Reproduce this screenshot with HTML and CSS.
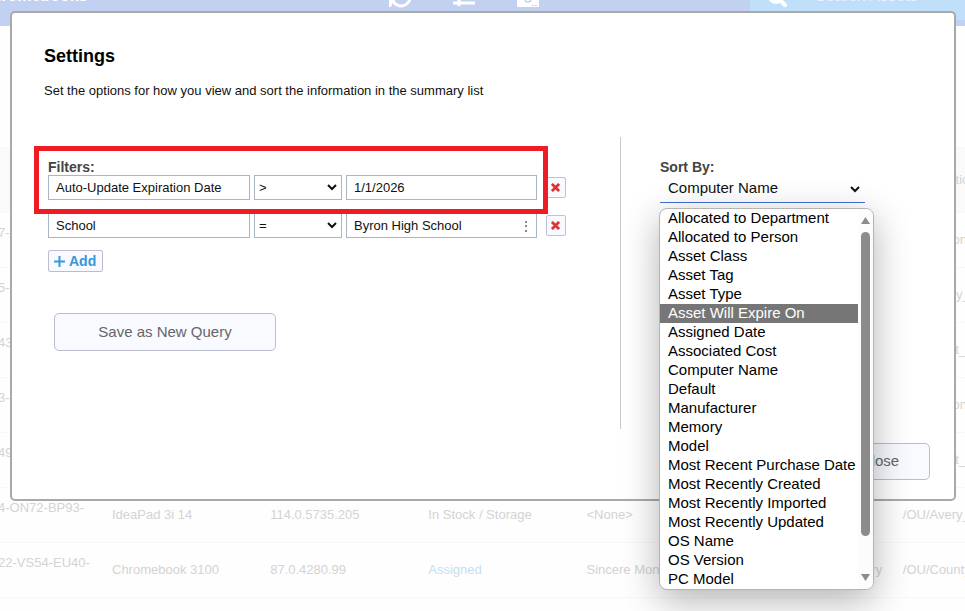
FILE: index.html
```html
<!DOCTYPE html>
<html lang="en">
  <head>
    <meta charset="UTF-8" />
    <title>Chromebooks - Settings</title>
    <link rel="stylesheet" href="styles.css">
  </head>
  <body>
    <div class="page">
      <header class="topbar">
        <span class="topbar-title">Chromebooks</span>
        <div class="topbar-icons">
          <svg width="24" height="24" viewBox="0 0 24 24" fill="none" stroke="#fff" stroke-width="3">
            <path d="M3 12a9 9 0 0 1 17-3M22 12a9 9 0 0 1-17 5" />
            <path d="M1 14h9l-5 4-2 5H1z" fill="#fff" stroke="none" />
          </svg>
          <svg width="24" height="24" viewBox="0 0 24 24" stroke="#fff" stroke-width="3">
            <path d="M1 5h22M1 12h22M1 19h22M7 16v6M16 9v6M9 2v6" />
          </svg>
          <svg width="24" height="24" viewBox="0 0 24 24">
            <path d="M1 3h22v19q0 1-1 1H2q-1 0-1-1z" fill="#fff" />
            <circle cx="12" cy="15" r="3" fill="none" stroke="#c2d1f2" stroke-width="1.500" />
            <path d="M16 21.500h2M19 21.500h2" stroke="#c2d1f2" />
          </svg>
        </div>
        <label class="search">
          <svg width="24" height="24" viewBox="0 0 24 24" fill="none" stroke="#fff">
            <circle cx="9" cy="12" r="6" stroke-width="4" />
            <path d="M13 16l5 5" stroke-width="4" stroke-linecap="round" />
          </svg>
          <input type="search" placeholder="Search Assets" aria-label="Search Assets" />
        </label>
      </header>

      <table class="assets">
        <thead>
          <tr>
            <th class="name"></th>
            <th>Model</th>
            <th>OS Version</th>
            <th>Status</th>
            <th>Assigned To</th>
            <th>School</th>
            <th>Organizational Unit</th>
          </tr>
        </thead>
        <tbody>
          <tr><td class="name">CB7-</td><td></td><td></td><td></td><td></td><td></td><td>/OU/Dalton_</td></tr>
          <tr><td class="name">CB5-</td><td></td><td></td><td></td><td></td><td></td><td>/OU/Avery_</td></tr>
          <tr><td class="name">CB43-</td><td></td><td></td><td></td><td></td><td></td><td>/OU/West_</td></tr>
          <tr><td class="name">CB3-</td><td></td><td></td><td></td><td></td><td></td><td>/OU/Dalton_</td></tr>
          <tr><td class="name">CB49-</td><td></td><td></td><td></td><td></td><td></td><td>/OU/West_</td></tr>
          <tr>
            <td class="name">CB4-ON72-BP93-</td>
            <td>IdeaPad 3i 14</td>
            <td>114.0.5735.205</td>
            <td>In Stock / Storage</td>
            <td>&lt;None&gt;</td>
            <td></td>
            <td>/OU/Avery_</td>
          </tr>
          <tr>
            <td class="name">CB22-VS54-EU40-</td>
            <td>Chromebook 3100</td>
            <td>87.0.4280.99</td>
            <td><a href="#">Assigned</a></td>
            <td>Sincere Monroe</td>
            <td>Washington Elementary</td>
            <td>/OU/County_</td>
          </tr>
        </tbody>
      </table>
    </div>

    <div class="dialog" role="dialog" aria-labelledby="dialogTitle">
      <h1 id="dialogTitle">Settings</h1>
      <p class="intro">Set the options for how you view and sort the information in the summary list</p>

      <div class="panels">
        <section class="filters">
          <h2>Filters:</h2>
          <div class="filter-row">
            <input class="box" type="text" value="Auto-Update Expiration Date" aria-label="Filter field" />
            <div class="picker">
              <select class="box" aria-label="Operator"><option>&gt;</option></select>
              <svg width="10" height="7" viewBox="0 0 10 7"><path d="M1 1l4 4 4-4" /></svg>
            </div>
            <input class="box" type="text" value="1/1/2026" aria-label="Filter value" />
            <button class="remove" aria-label="Remove filter">
              <svg width="9" height="9" viewBox="0 0 10 10"><path d="M1 1l8 8M9 1l-8 8" /></svg>
            </button>
          </div>
          <div class="filter-row">
            <input class="box" type="text" value="School" aria-label="Filter field" />
            <div class="picker">
              <select class="box" aria-label="Operator"><option>=</option></select>
              <svg width="10" height="7" viewBox="0 0 10 7"><path d="M1 1l4 4 4-4" /></svg>
            </div>
            <div class="picker">
              <input class="box" type="text" value="Byron High School" aria-label="Filter value" />
              <svg class="dots" width="12" height="12" viewBox="0 0 12 12">
                <rect x="5" y="1" width="2" height="2" />
                <rect x="5" y="5" width="2" height="2" />
                <rect x="5" y="10" width="2" height="2" />
              </svg>
            </div>
            <button class="remove" aria-label="Remove filter">
              <svg width="9" height="9" viewBox="0 0 10 10"><path d="M1 1l8 8M9 1l-8 8" /></svg>
            </button>
          </div>
          <button class="add">
            <svg width="11" height="11" viewBox="0 0 11 11"><path d="M5.500 0v11M0 5.500h11" /></svg>
            Add
          </button>
          <button class="big save">Save as New Query</button>
          <div class="highlight"></div>
        </section>

        <section class="sort">
          <label class="sort-label" for="sortBy">Sort By:</label>
          <div class="picker sort-picker">
            <select id="sortBy"><option>Computer Name</option></select>
            <svg width="10" height="7" viewBox="0 0 10 7"><path d="M1 1l4 4 4-4" /></svg>
            <div class="menu">
              <ul role="listbox" aria-label="Sort By">
                <li role="option">Allocated to Department</li>
                <li role="option">Allocated to Person</li>
                <li role="option">Asset Class</li>
                <li role="option">Asset Tag</li>
                <li role="option">Asset Type</li>
                <li role="option" class="active">Asset Will Expire On</li>
                <li role="option">Assigned Date</li>
                <li role="option">Associated Cost</li>
                <li role="option">Computer Name</li>
                <li role="option">Default</li>
                <li role="option">Manufacturer</li>
                <li role="option">Memory</li>
                <li role="option">Model</li>
                <li role="option">Most Recent Purchase Date</li>
                <li role="option">Most Recently Created</li>
                <li role="option">Most Recently Imported</li>
                <li role="option">Most Recently Updated</li>
                <li role="option">OS Name</li>
                <li role="option">OS Version</li>
                <li role="option">PC Model</li>
              </ul>
              <div class="scrollbar">
                <svg width="9" height="7" viewBox="0 0 9 7"><path d="M4.500 0L9 7H0z" /></svg>
                <div class="thumb"></div>
                <svg width="9" height="7" viewBox="0 0 9 7"><path d="M0 0h9L4.500 7z" /></svg>
              </div>
            </div>
          </div>
        </section>
      </div>

      <div class="actions">
        <button class="big close">Close</button>
      </div>
    </div>
  </body>
</html>
```
FILE: styles.css
```css
* {
  box-sizing: border-box;
}

body {
  margin: 0;
  background-color: #fefefe;
  color: #111;
  font-family: "Liberation Sans", Arial, sans-serif;
  font-size: 14px;
  overflow: hidden;
}

input,
select,
button {
  font-family: inherit;
  color: inherit;
  margin: 0;
}

/* asset list behind the dialog, scrolled a little */
.page {
  margin: -30px 0 0 -20px;
  overflow: hidden;
}

.topbar {
  display: flex;
  align-items: center;
  height: 56px;
  background-color: #c2d1f2;
}

.topbar-title {
  flex: 0 0 408px;
  padding-bottom: 4px;
  color: #fff;
  font-size: 16px;
  font-weight: bold;
}

.topbar-icons {
  display: flex;
  flex: 1;
  gap: 40px;
  padding-bottom: 4px;
}

.search {
  display: flex;
  align-items: center;
  gap: 24px;
  width: 215px;
  height: 44px;
  padding: 0 0 4px 17px;
  background-color: #c0dffa;
}

.search svg {
  flex: none;
}

.search input {
  width: 140px;
  border: none;
  padding: 0;
  background: none;
  font-size: 16px;
}

.search input::placeholder {
  color: #eaf4fe;
}

.assets {
  width: calc(100% + 96px);
  margin-top: 121px;
  border-collapse: collapse;
  table-layout: fixed;
  color: #d3d3d3;
  font-size: 13px;
}

.assets th,
.assets td {
  height: 55px;
  padding: 0 0 2px;
  border-top: 1px solid #f7f7f7;
  border-bottom: 1px solid #f7f7f7;
  font-weight: normal;
  text-align: left;
  white-space: nowrap;
}

.assets th {
  height: 65px;
  background-color: #fafafa;
}

.assets .name {
  width: 132px;
  padding-bottom: 16px;
}

.assets a {
  color: #c3dff4;
  text-decoration: none;
}

.dialog {
  position: absolute;
  top: 11px;
  left: 10px;
  right: 9px;
  padding: 32px 24px 19px 32px;
  border: 2px solid #a9a9a9;
  border-radius: 5px;
  background-color: #fff;
}

h1 {
  margin: 0;
  color: #000;
  font-size: 18px;
  line-height: 22px;
}

.intro {
  margin: 16px 0 38px;
  font-size: 13px;
  line-height: 16px;
}

.panels {
  display: flex;
}

.filters {
  position: relative;
  flex: 1;
  height: 292px;
  padding: 22px 0 0 4px;
  border-right: 1px solid #c8c8c8;
}

h2,
.sort-label {
  display: block;
  margin: 0;
  color: #444;
  font-size: 14px;
  font-weight: bold;
  line-height: 16px;
}

.filter-row {
  display: grid;
  grid-template-columns: 202px 88px 191px 20px;
  column-gap: 4px;
  align-items: center;
  margin-bottom: 13px;
}

.filter-row .remove {
  margin-left: 5px;
}

.picker {
  position: relative;
}

.picker > svg {
  position: absolute;
  top: 9px;
  right: 5px;
  fill: none;
  stroke: #111;
  stroke-width: 2;
  pointer-events: none;
}

.picker > .dots {
  top: 7px;
  fill: #888;
  stroke: none;
}

.box {
  display: block;
  width: 100%;
  height: 25px;
  padding: 0 7px;
  border: 1px solid #a9b4c4;
  border-radius: 0;
  background-color: #fff;
  font-size: 13px;
  appearance: none;
}

select.box {
  padding: 0 4px;
}

.remove {
  display: flex;
  align-items: center;
  justify-content: center;
  width: 20px;
  height: 21px;
  padding: 0 1px 1px 0;
  border: 1px solid #c0c0d6;
  border-radius: 2px;
  background-color: #f9faff;
}

.remove svg {
  stroke: #e03030;
  stroke-width: 3;
}

.add {
  display: flex;
  align-items: center;
  gap: 4px;
  height: 22px;
  margin-top: -1px;
  padding: 0 6px 0 5px;
  border: 1px solid #bcbcd0;
  border-radius: 2px;
  background-color: #f9faff;
  color: #3498db;
  font-size: 14px;
  font-weight: bold;
}

.add svg {
  stroke: #3498db;
  stroke-width: 2;
}

.big {
  height: 38px;
  padding: 0 0 2px;
  border: 1px solid #bcbcd0;
  border-radius: 5px;
  background-color: #f9faff;
  color: #666;
  font-size: 15px;
}

.save {
  display: block;
  width: 222px;
  margin: 41px 0 0 6px;
}

/* red marker round the first filter */
.highlight {
  position: absolute;
  top: 9px;
  left: -10px;
  width: 514px;
  height: 68px;
  border: 5px solid #ee1c25;
  pointer-events: none;
}

.sort {
  width: 309px;
  padding: 22px 65px 0 39px;
}

#sortBy {
  display: block;
  width: 100%;
  height: 28px;
  padding: 0 8px 2px;
  border: none;
  border-bottom: 1px solid #3f6fd8;
  border-radius: 0;
  background-color: #fff;
  font-size: 15px;
  appearance: none;
}

.sort-picker > svg {
  top: 11px;
}

.menu {
  position: absolute;
  top: 33px;
  left: -1px;
  display: flex;
  width: 215px;
  border: 1px solid #b4b4b4;
  border-radius: 8px;
  background-color: #fff;
  box-shadow: 0 10px 36px rgba(0, 0, 0, 0.3);
  overflow: hidden;
}

.menu ul {
  flex: 1;
  margin: 0;
  padding: 0;
  list-style: none;
}

.menu li {
  padding: 0 0 2px 8px;
  color: #000;
  font-size: 15px;
  line-height: 17px;
  white-space: nowrap;
}

.menu .active {
  background-color: #767676;
  color: #fff;
}

.scrollbar {
  display: flex;
  flex-direction: column;
  align-items: center;
  gap: 8px;
  width: 15px;
  padding: 8px 0;
  background-color: #fcfcfc;
}

.scrollbar svg {
  fill: #8b8b8b;
}

.thumb {
  width: 9px;
  height: 304px;
  margin-bottom: auto;
  border-radius: 5px;
  background-color: #8b8b8b;
}

.actions {
  display: flex;
  justify-content: flex-end;
  margin-top: 14px;
}

.close {
  width: 100px;
  height: 37px;
}
```
